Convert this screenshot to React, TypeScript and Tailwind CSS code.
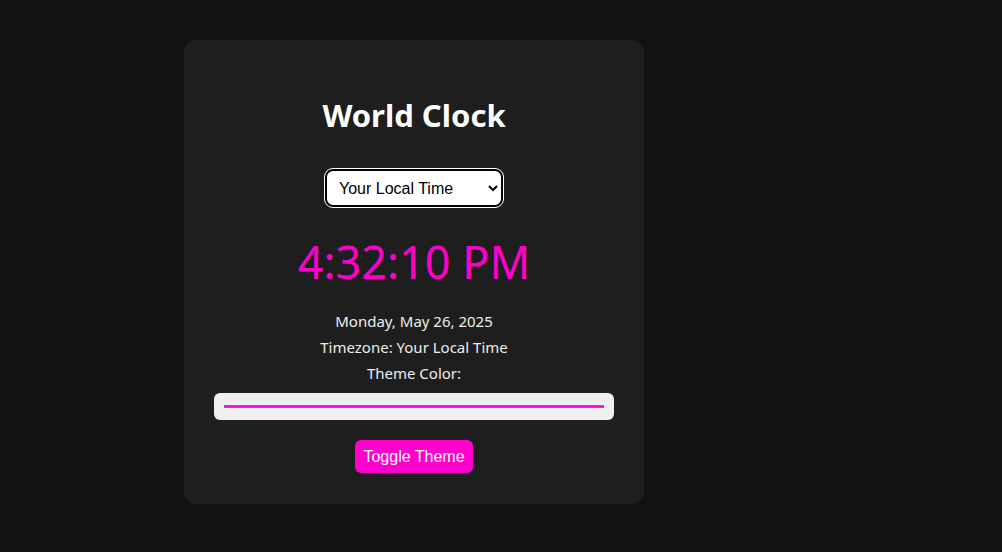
import React, { useState } from 'react';

const THEME = '#ff00cc';

const App: React.FC = () => {
  const [zone, setZone] = useState('local');

  return (
    <div className="min-h-[552px] w-full bg-[#121212] pt-10 pl-[184px]">
      <div
        className="w-[460px] rounded-xl bg-[#1e1e1e] px-[30px] pt-[56px] pb-[31px] flex flex-col items-center text-[#eeeeee]"
        style={{ fontFamily: '"Noto Sans", "Open Sans", sans-serif' }}
      >
        <h1 className="text-[31px] leading-[38px] font-bold text-white">World Clock</h1>

        <select
          value={zone}
          onChange={(e) => setZone(e.target.value)}
          className="mt-[35px] h-[38px] w-[178px] rounded-lg border-2 border-black bg-white pl-2 pr-1 text-[16px] text-black outline outline-1 outline-white"
          style={{ fontFamily: '"Liberation Sans", Arial, sans-serif' }}
        >
          <option value="local">Your Local Time</option>
          <option value="utc">UTC</option>
          <option value="ny">New York</option>
          <option value="london">London</option>
          <option value="tokyo">Tokyo</option>
        </select>

        <div className="mt-[26px] text-[45px] leading-[58px] text-[#ff00cc]">4:32:10 PM</div>

        <div className="mt-[17px] flex flex-col items-center text-[15px] leading-[26px]">
          <p>Monday, May 26, 2025</p>
          <p>Timezone: Your Local Time</p>
          <p>Theme Color:</p>
        </div>

        {/* color input look-alike */}
        <div className="mt-[7px] h-[27px] w-[400px] rounded-md bg-[#efefef] px-[10px] flex items-center">
          <div className="h-[3px] w-full border border-[#777] bg-[#ff00cc]" style={{ backgroundColor: THEME }} />
        </div>

        <button
          className="mt-5 h-[33px] rounded-md bg-[#ff00cc] px-2 text-[16px] text-white"
          style={{ fontFamily: '"Liberation Sans", Arial, sans-serif' }}
        >
          Toggle Theme
        </button>
      </div>
    </div>
  );
};

export default App;
